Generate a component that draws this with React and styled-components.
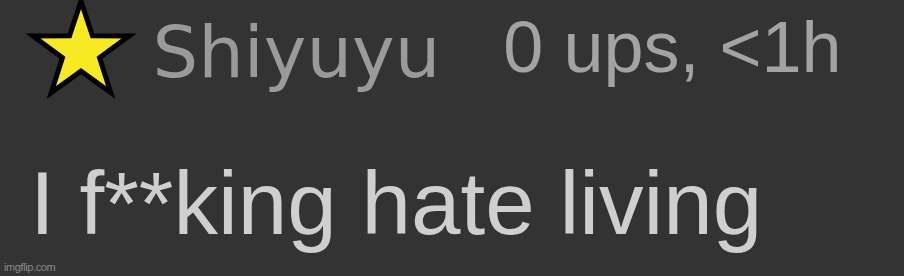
import React from "react";
import styled, { createGlobalStyle } from "styled-components";

const Global = createGlobalStyle`
  html, body {
    margin: 0;
    padding: 0;
    background: #333333;
    overflow: hidden;
  }
`;

const Page = styled.div`
  position: relative;
  width: 904px;
  height: 276px;
  background: #333333;
  overflow: hidden;
`;

const Header = styled.div`
  display: flex;
  align-items: flex-start;
  height: 100px;
`;

const StarIcon = styled.svg`
  display: block;
  flex: none;
  width: 124px;
  height: 100px;
  margin-left: 18.5px;
`;

const Name = styled.div`
  margin-left: 10px;
  margin-top: 16px;
  font-family: "DejaVu Sans", Verdana, sans-serif;
  font-size: 72px;
  line-height: 72px;
  color: #9a9a9a;
  white-space: nowrap;
`;

const Meta = styled.div`
  margin-left: 63px;
  margin-top: 11px;
  font-family: "Liberation Sans", Arial, sans-serif;
  font-size: 72px;
  line-height: 72px;
  color: #a3a3a3;
  white-space: nowrap;
`;

const Body = styled.div`
  margin-top: 58px;
  margin-left: 30px;
  font-family: "Liberation Sans", Arial, sans-serif;
  font-size: 89px;
  line-height: 90px;
  color: #cfcfcf;
  white-space: nowrap;
`;

const Watermark = styled.div`
  position: absolute;
  left: 4px;
  bottom: 3px;
  font-family: "Liberation Sans", Arial, sans-serif;
  font-size: 11px;
  line-height: 11px;
  letter-spacing: -0.4px;
  color: #8a8a8a;
`;

function starPoints(cx, cy, R, r) {
  const pts = [];
  for (let i = 0; i < 10; i++) {
    const rad = i % 2 === 0 ? R : r;
    const a = ((-90 + i * 36) * Math.PI) / 180;
    pts.push(`${(cx + rad * Math.cos(a)).toFixed(2)},${(cy + rad * Math.sin(a)).toFixed(2)}`);
  }
  return pts.join(" ");
}

export default function App() {
  return (
    <Page>
      <Global />
      <Header>
        <StarIcon viewBox="0 0 124 100">
          <polygon
            points={starPoints(62, 51.6, 50.5, 19.5)}
            fill="#f7ea22"
            stroke="#000"
            strokeWidth="5"
            strokeLinejoin="miter"
            strokeMiterlimit="10"
          />
        </StarIcon>
        <Name>Shiyuyu</Name>
        <Meta>0 ups, &lt;1h</Meta>
      </Header>
      <Body>I f**king hate living</Body>
      <Watermark>imgflip.com</Watermark>
    </Page>
  );
}
